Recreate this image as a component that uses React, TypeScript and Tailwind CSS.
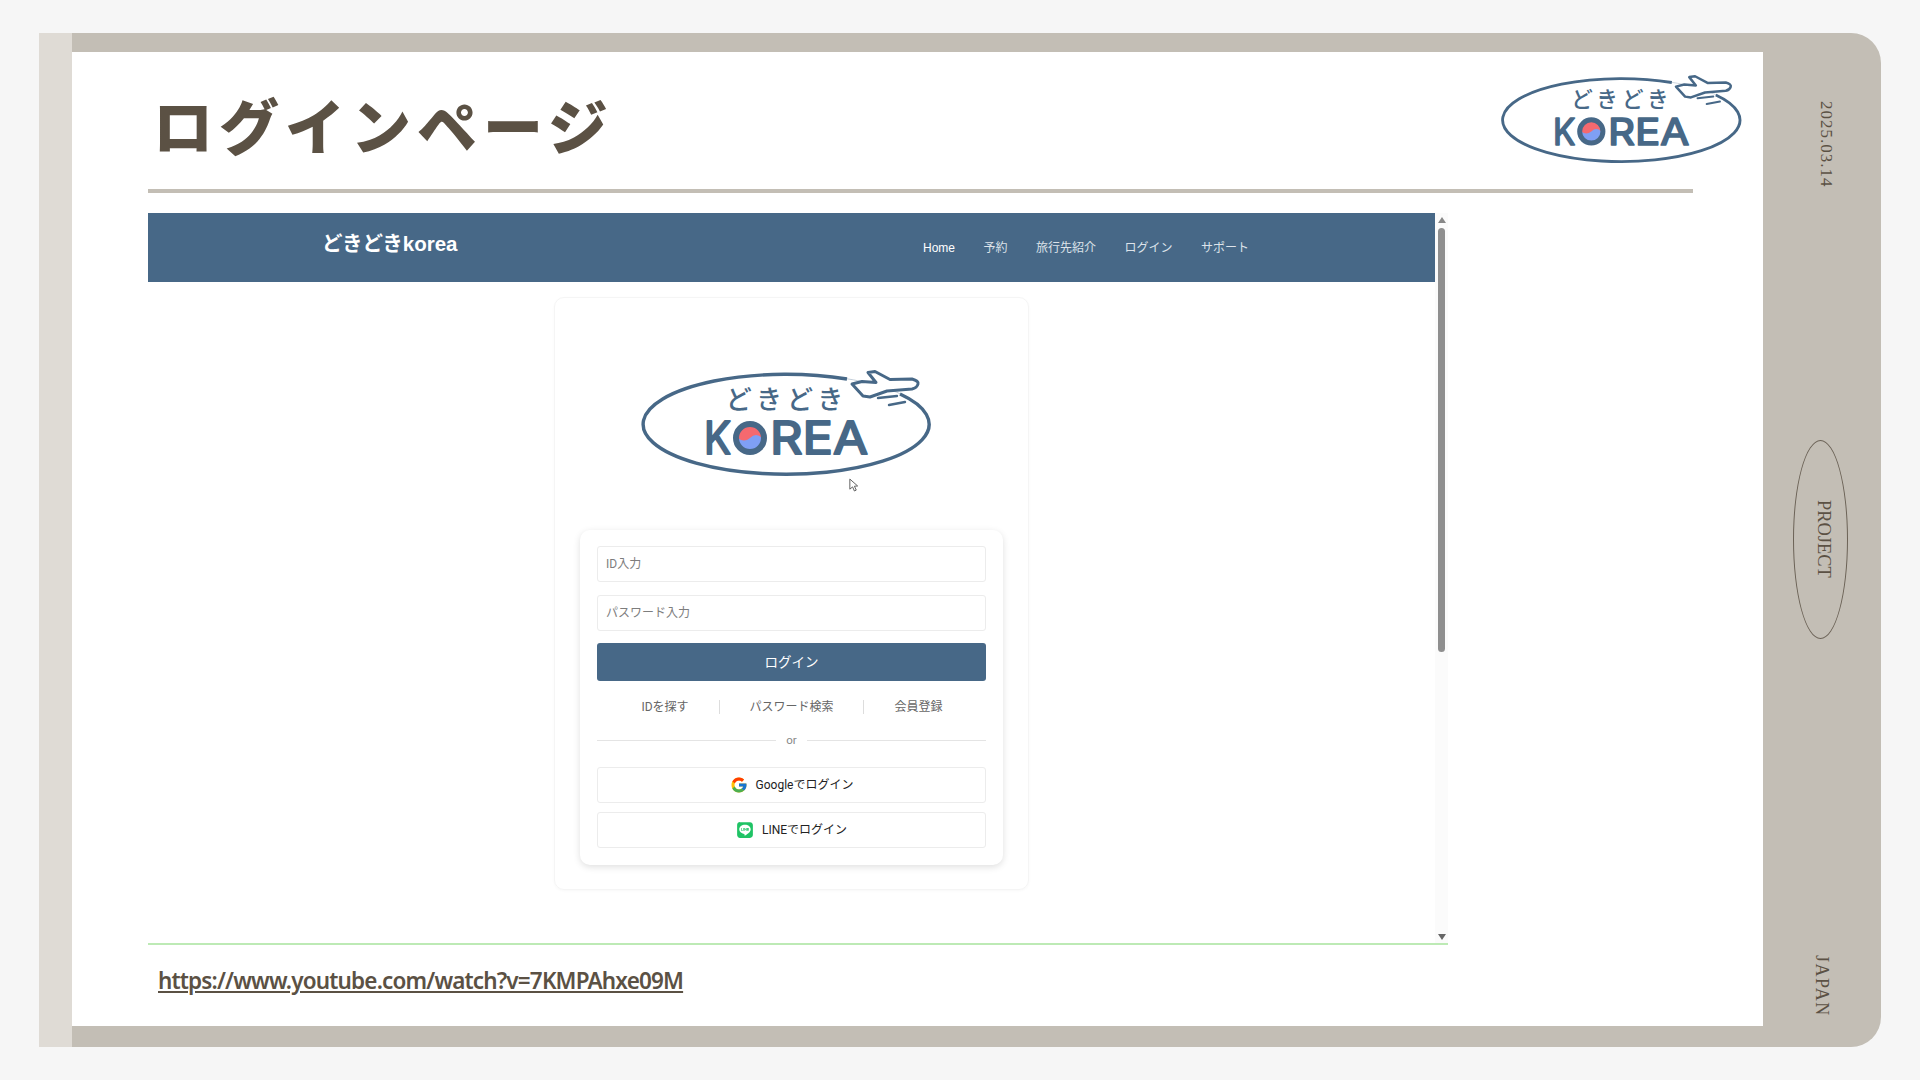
import { FcGoogle } from 'react-icons/fc';
import { FaLine } from 'react-icons/fa';

const navItems = ['予約', '旅行先紹介', 'ログイン', 'サポート'];

const KoreaLogo = ({ className }: { className: string }) => (
  <svg viewBox="0 0 300 120" className={className}>
    <ellipse cx="146.3" cy="55" rx="143" ry="50" fill="none" stroke="#b4c2cf" strokeWidth="0.8" />
    <path d="M260 25 A143 50 0 1 1 207 10" fill="none" stroke="#476887" strokeWidth="3.4" />
    <path
      d="M212 15 L222 12.5 L236 13.5 L228 3.5 L235 2.5 L250 10.5 L272 10 Q279 12 278 15 Q277 19 272 20 L247 22 L230 28 L223 27 Z"
      fill="#fff"
      stroke="#476887"
      strokeWidth="3"
      strokeLinejoin="round"
    />
    <path d="M238 29 L257 27 M249 36 L265 33" stroke="#476887" strokeWidth="2.4" strokeLinecap="round" />
    <text
      x="147"
      y="39.5"
      textAnchor="middle"
      fontFamily="'Noto Sans CJK JP', sans-serif"
      fontSize="26"
      fontWeight="500"
      letterSpacing="5"
      fill="#476887"
    >
      どきどき
    </text>
    <g
      fontFamily="Inter, sans-serif"
      fontSize="45"
      fontWeight="400"
      fill="#476887"
      stroke="#476887"
      strokeWidth="2"
      strokeLinejoin="round"
    >
      <text x="64" y="85" textLength="27" lengthAdjust="spacingAndGlyphs">K</text>
      <text x="130" y="85" textLength="98" lengthAdjust="spacingAndGlyphs">REA</text>
    </g>
    <circle cx="110" cy="69" r="12" fill="#7f9ff5" />
    <path d="M98 69 A12 12 0 0 1 122 69 Q116 63 110 69 Q104 74 98 69 Z" fill="#f5696f" />
    <circle cx="110" cy="69" r="14" fill="none" stroke="#476887" strokeWidth="6" />
  </svg>
);

const Field = ({ placeholder }: { placeholder: string }) => (
  <input
    placeholder={placeholder}
    className="h-[36px] w-full rounded-[3px] border border-[#ececec] bg-white px-2 text-[12px] text-[#555] placeholder:text-[#7d7d7d]"
  />
);

const App = () => {
  return (
    <div className="h-screen w-screen overflow-hidden bg-[#f6f6f6] pl-[39px] pt-[33px] font-['Roboto','Noto_Sans_CJK_JP',sans-serif]">
      <div className="flex h-[1014px] w-[1842px]">
        <div className="w-[33px] bg-[#dfdbd5]" />

        <div className="flex w-[1691px] flex-col">
          <div className="h-[19px] bg-[#c3beb5]" />

          <main className="flex flex-1 flex-col bg-white pl-[76px] pr-[70px]">
            <header className="flex h-[141px] justify-between border-b-[4px] border-[#c3beb5]">
              <h1 className="mt-[28px] pl-[5px] font-['Noto_Sans_CJK_JP',sans-serif] text-[60px] font-black leading-[88px] tracking-[6px] text-[#5b5144]">
                ログインページ
              </h1>
              <KoreaLogo className="-mr-[56px] mt-[22px] h-[100px] w-[249px]" />
            </header>

            <div className="mt-[20px] flex h-[732px] w-[1300px] border-b-2 border-[#bdeab5]">
              <div className="flex w-[1287px] flex-col">
                <nav className="flex h-[69px] items-center bg-[#476887] text-white">
                  <span className="ml-[174px] mb-[6px] w-[601px] font-['Liberation_Sans','Noto_Sans_CJK_JP',sans-serif] text-[20.5px] font-bold">
                    どきどきkorea
                  </span>
                  <div className="flex gap-[28.5px] font-['Liberation_Sans','Noto_Sans_CJK_JP',sans-serif] text-[12px] text-[#dde3ea]">
                    <span className="font-medium text-white">Home</span>
                    {navItems.map((item) => (
                      <span key={item}>{item}</span>
                    ))}
                  </div>
                </nav>

                <section className="mx-auto mt-[15px] h-[593px] w-[475px] rounded-[10px] border border-[#f5f5f5] px-[25px] shadow-[0_1px_3px_rgba(0,0,0,0.03)]">
                  <div className="relative ml-[60px] mt-[71px] h-[120px] w-[300px]">
                    <KoreaLogo className="h-[120px] w-[300px]" />
                    <svg viewBox="0 0 12 16" className="absolute left-[208px] top-[109px] h-[15px] w-[11px]">
                      <path d="M2 1 L2 12 L5 9.5 L7 14 L9 13 L7 8.8 L10.5 8.5 Z" fill="#fff" stroke="#555" strokeWidth="1" strokeLinejoin="round" />
                    </svg>
                  </div>

                  <div className="mt-[41px] h-[335px] w-[423px] rounded-[10px] bg-white px-[17px] pt-[16px] shadow-[0_2px_7px_rgba(0,0,0,0.13)]">
                    <div className="flex flex-col gap-[13px]">
                      <Field placeholder="ID入力" />
                      <Field placeholder="パスワード入力" />
                    </div>
                    <button className="mt-[12px] h-[38px] w-full rounded-[3px] bg-[#476887] text-[13.5px] text-white">
                      ログイン
                    </button>

                    <div className="mt-[17px] flex h-[18px] items-center justify-center text-[12px] text-[#666]">
                      <span className="w-[122px] pl-[14px] text-center">IDを探す</span>
                      <span className="h-[14px] w-px bg-[#ddd]" />
                      <span className="w-[143px] text-center">パスワード検索</span>
                      <span className="h-[14px] w-px bg-[#ddd]" />
                      <span className="w-[122px] pr-[13px] text-center">会員登録</span>
                    </div>

                    <div className="mt-[15px] flex items-center gap-[10px] text-[11.5px] leading-[18px] text-[#888]">
                      <span className="h-px flex-1 bg-[#e4e4e4]" />
                      or
                      <span className="h-px flex-1 bg-[#e4e4e4]" />
                    </div>

                    <button className="mt-[18px] flex h-[36px] w-full items-center justify-center gap-[8px] rounded-[3px] border border-[#ececec] text-[12px] text-[#222]">
                      <FcGoogle className="h-[18px] w-[18px]" />
                      Googleでログイン
                    </button>
                    <button className="mt-[9px] flex h-[36px] w-full items-center justify-center gap-[8px] rounded-[3px] border border-[#ececec] text-[12px] text-[#222]">
                      <FaLine className="h-[18px] w-[18px] text-[#1fc365]" />
                      LINEでログイン
                    </button>
                  </div>
                </section>
              </div>

              <div className="flex w-[13px] flex-col items-center bg-[#fbfbfb]">
                <div className="mt-[4px] h-0 w-0 border-x-[4px] border-b-[6px] border-x-transparent border-b-[#888]" />
                <div className="mt-[5px] h-[424px] w-[7px] rounded-full bg-[#8f8f8f]" />
                <div className="mt-auto mb-[3px] h-0 w-0 border-x-[4px] border-t-[6px] border-x-transparent border-t-[#666]" />
              </div>
            </div>

            <a className="ml-[10px] mt-[21px] w-fit font-['Noto_Sans',sans-serif] text-[22.5px] font-semibold leading-[30px] tracking-[-0.84px] text-[#5b5144] underline">
              https://www.youtube.com/watch?v=7KMPAhxe09M
            </a>
          </main>

          <div className="h-[21px] bg-[#c3beb5]" />
        </div>

        <aside className="flex w-[118px] flex-col items-center rounded-r-[30px] bg-[#c3beb5] font-['Liberation_Serif',serif] text-[#5b5144]">
          <span className="mt-[68px] ml-[8px] [writing-mode:vertical-rl] text-[17px] leading-[18px] tracking-[1px]">2025.03.14</span>
          <div className="-ml-[4px] mt-[252px] flex h-[199px] w-[55px] items-center justify-center rounded-[50%] border border-[#6b6256] pl-[7px]">
            <span className="[writing-mode:vertical-rl] text-[18.4px] leading-[18px]">PROJECT</span>
          </div>
          <span className="mt-[316px] -ml-[1px] [writing-mode:vertical-rl] text-[18px] leading-[18px] tracking-[1.5px]">JAPAN</span>
        </aside>
      </div>
    </div>
  );
};

export default App;
